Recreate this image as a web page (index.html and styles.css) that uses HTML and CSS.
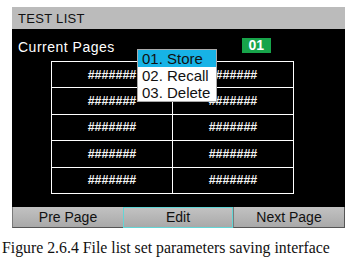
FILE: index.html
```html
<!DOCTYPE html>
<html lang="en">
<head>
    <meta charset="UTF-8">
    <meta name="viewport" content="width=device-width, initial-scale=1.0">
    <title>Test List</title>
    <link rel="stylesheet" href="styles.css">
</head>
<body>
    <div class="screen">
        <div class="title-bar">TEST LIST</div>
        <div class="display">
            <div class="info-row">
                <span class="info-label">Current Pages</span>
                <span class="page-badge">01</span>
            </div>
            <div class="page-table">
                <div class="cell">#######</div>
                <div class="cell">#######</div>
                <div class="cell">#######</div>
                <div class="cell">#######</div>
                <div class="cell">#######</div>
                <div class="cell">#######</div>
                <div class="cell">#######</div>
                <div class="cell">#######</div>
                <div class="cell">#######</div>
                <div class="cell">#######</div>
            </div>
            <ul class="popup-menu">
                <li class="active">01. Store</li>
                <li>02. Recall</li>
                <li>03. Delete</li>
            </ul>
        </div>
        <div class="softkeys">
            <div class="key">Pre Page</div>
            <div class="key selected">Edit</div>
            <div class="key">Next Page</div>
        </div>
    </div>
    <p class="caption">Figure 2.6.4 File list set parameters saving interface</p>
</body>
</html>
```

FILE: styles.css
```css
body {
    margin: 0;
    padding: 0;
    background-color: #fff;
    font-family: "Liberation Sans", Arial, sans-serif;
}
.screen {
    width: 333px;
    margin: 7px 0 0 12px;
}
.title-bar {
    height: 22px;
    line-height: 23px;
    padding-left: 6px;
    background-color: #bbbbbb;
    color: #111;
    font-size: 13px;
    letter-spacing: 0.3px;
}
.display {
    position: relative;
    height: 178px;
    background-color: #000;
}
.info-row {
    display: flex;
    align-items: flex-start;
    height: 32px;
    padding-left: 6px;
}
.info-label {
    margin-top: 10px;
    color: #fff;
    font-size: 14px;
    letter-spacing: 0.5px;
}
.page-badge {
    margin: 9px 0 0 127px;
    width: 29px;
    height: 15px;
    line-height: 15px;
    text-align: center;
    background-color: #17a44a;
    color: #fff;
    font-size: 14px;
    font-weight: bold;
}
.page-table {
    display: grid;
    grid-template-columns: 120px 120px;
    grid-auto-rows: 25.4px;
    gap: 1px;
    width: 241px;
    margin-left: 39px;
    padding: 1px;
    background-color: #fff;
}
.cell {
    display: flex;
    align-items: center;
    justify-content: center;
    background-color: #000;
    color: #f4f4f4;
    font-size: 12.5px;
    font-weight: bold;
}
.popup-menu {
    position: absolute;
    left: 125px;
    top: 20px;
    width: 78px;
    margin: 0;
    padding: 0;
    list-style: none;
    background-color: #fff;
    border: 1px solid #aaa;
}
.popup-menu li {
    height: 17px;
    line-height: 18px;
    padding-left: 4px;
    color: #111;
    font-size: 15px;
}
.popup-menu li.active {
    background-color: #17b3e6;
}
.softkeys {
    display: flex;
    height: 21px;
}
.key {
    box-sizing: border-box;
    flex: 0 0 111px;
    height: 21px;
    line-height: 21px;
    text-align: center;
    background: linear-gradient(#c2c2c2, #a9a9a9);
    border-left: 1px solid #7a7a7a;
    border-bottom: 1px solid #555;
    color: #111;
    font-size: 14px;
}
.key.selected {
    flex-basis: 110px;
    border: 1px solid #63d6d6;
    line-height: 19px;
}
.key:last-child {
    flex-basis: 112px;
    border-right: 1px solid #555;
}
.caption {
    margin: 11px 0 0 2px;
    font-family: "Liberation Serif", "Times New Roman", serif;
    font-size: 15.8px;
    color: #111;
}
```
